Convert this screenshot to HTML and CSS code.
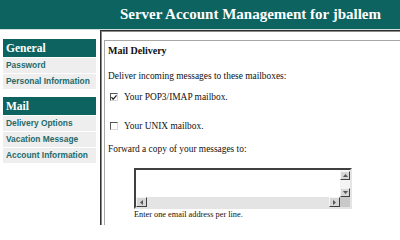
FILE: index.html
```html
<!DOCTYPE html>
<html>
<head>
<meta charset="utf-8">
<link rel="stylesheet" href="styles.css">
</head>
<body>
<div class="header">Server Account Management for jballem</div>
<div class="main">
  <div class="sidebar">
    <div class="group">
      <div class="group-title">General</div>
      <div class="item">Password</div>
      <div class="item">Personal Information</div>
    </div>
    <div class="group">
      <div class="group-title">Mail</div>
      <div class="item">Delivery Options</div>
      <div class="item">Vacation Message</div>
      <div class="item">Account Information</div>
    </div>
  </div>
  <div class="content">
    <div class="panel">
      <div class="title">Mail Delivery</div>
      <div class="text intro">Deliver incoming messages to these mailboxes:</div>
      <div class="option first"><span class="cb"><svg width="7" height="7" viewBox="0 0 7 7"><polyline points="0.5,3 2.5,5.5 6.5,1" fill="none" stroke="#222" stroke-width="1.4"/></svg></span>Your POP3/IMAP mailbox.</div>
      <div class="option second"><span class="cb"></span>Your UNIX mailbox.</div>
      <div class="text fwd">Forward a copy of your messages to:</div>
      <div class="ta">
        <div class="ta-area"></div>
        <div class="vscroll">
          <span class="btn"><svg width="5" height="3" viewBox="0 0 5 3"><polygon points="0,3 2.5,0 5,3" fill="#555"/></svg></span>
          <span class="vtrack"></span>
          <span class="btn"><svg width="5" height="3" viewBox="0 0 5 3"><polygon points="0,0 2.5,3 5,0" fill="#555"/></svg></span>
        </div>
        <div class="hscroll">
          <span class="btn"><svg width="3" height="5" viewBox="0 0 3 5"><polygon points="3,0 0,2.5 3,5" fill="#555"/></svg></span>
          <span class="htrack"></span>
          <span class="btn"><svg width="3" height="5" viewBox="0 0 3 5"><polygon points="0,0 3,2.5 0,5" fill="#555"/></svg></span>
        </div>
        <div class="corner"></div>
      </div>
      <div class="caption">Enter one email address per line.</div>
    </div>
  </div>
</div>
</body>
</html>
```
FILE: styles.css
```css
html, body {
  margin: 0;
  padding: 0;
  background: #ffffff;
  width: 400px;
  height: 225px;
  overflow: hidden;
  font-family: "Liberation Serif", "Times New Roman", serif;
}
.header {
  height: 29px;
  line-height: 28px;
  background: #0c6360;
  border-bottom: 1px solid #cfdcdc;
  color: #ffffff;
  font-weight: bold;
  font-size: 15px;
  text-align: right;
  padding-right: 19px;
  box-sizing: content-box;
}
.main {
  display: flex;
  height: 195px;
}
.sidebar {
  width: 93px;
  margin-left: 3px;
  padding-top: 9px;
  display: flex;
  flex-direction: column;
  gap: 8px;
}
.group-title {
  height: 18px;
  line-height: 18px;
  background: #0c6360;
  color: #ffffff;
  font-weight: bold;
  font-size: 11.5px;
  padding-left: 3px;
}
.item {
  margin-top: 1px;
  height: 15px;
  line-height: 15px;
  background: #eeeeee;
  color: #1f6b6b;
  font-family: "Liberation Sans", Arial, sans-serif;
  font-weight: bold;
  font-size: 8.4px;
  padding-left: 3px;
  white-space: nowrap;
}
.content {
  flex: 1;
  margin-left: 4px;
  border-top: 1px solid #303030;
  border-left: 1px solid #303030;
  box-shadow: inset 1px 1px 0 #8a8a8a;
  padding: 9px 0 0 3px;
}
.panel {
  border-top: 1px solid #a8a8a8;
  border-left: 1px solid #a8a8a8;
  height: 100%;
  padding: 4px 0 0 3px;
  color: #111111;
}
.title {
  font-weight: bold;
  font-size: 10px;
  line-height: 12px;
}
.text {
  font-size: 9.4px;
  line-height: 12px;
  white-space: nowrap;
}
.intro { margin-top: 13px; }
.option {
  display: flex;
  align-items: center;
  font-size: 9.4px;
  line-height: 12px;
  white-space: nowrap;
}
.option.first { margin-top: 9px; }
.option.second { margin-top: 17px; }
.cb {
  width: 8px;
  height: 8px;
  box-sizing: border-box;
  margin-left: 2px;
  margin-right: 6px;
  border-top: 1px solid #555555;
  border-left: 1px solid #555555;
  border-right: 1px solid #d8d8d8;
  border-bottom: 1px solid #d8d8d8;
  background: #ffffff;
  display: flex;
  align-items: center;
  justify-content: center;
}
.fwd { margin-top: 11px; }
.ta {
  margin-top: 13px;
  margin-left: 26px;
  width: 218px;
  height: 41px;
  box-sizing: border-box;
  border-top: 2px solid #404040;
  border-left: 2px solid #404040;
  border-right: 2px solid #e4e4e4;
  border-bottom: 2px solid #e4e4e4;
  display: grid;
  grid-template-columns: 1fr 10px;
  grid-template-rows: 1fr 10px;
  background: #ffffff;
}
.ta-area { background: #ffffff; }
.vscroll {
  display: flex;
  flex-direction: column;
  background: #f2f2f2;
  padding-top: 1px;
}
.vtrack { flex: 1; background: #f4f4f4; }
.hscroll {
  display: flex;
  background: #e4e4e4;
}
.htrack { flex: 1; background: #e4e4e4; }
.corner { background: #c8c8c8; }
.btn {
  width: 10px;
  height: 9px;
  box-sizing: border-box;
  background: #d6d6d6;
  border-top: 1px solid #f4f4f4;
  border-left: 1px solid #f4f4f4;
  border-right: 1px solid #404040;
  border-bottom: 1px solid #404040;
  display: flex;
  align-items: center;
  justify-content: center;
}
.hscroll .btn { height: 10px; width: 11px; }
.caption {
  margin-top: 1px;
  margin-left: 26px;
  font-size: 8.3px;
  line-height: 10px;
  white-space: nowrap;
  color: #111111;
}
```
